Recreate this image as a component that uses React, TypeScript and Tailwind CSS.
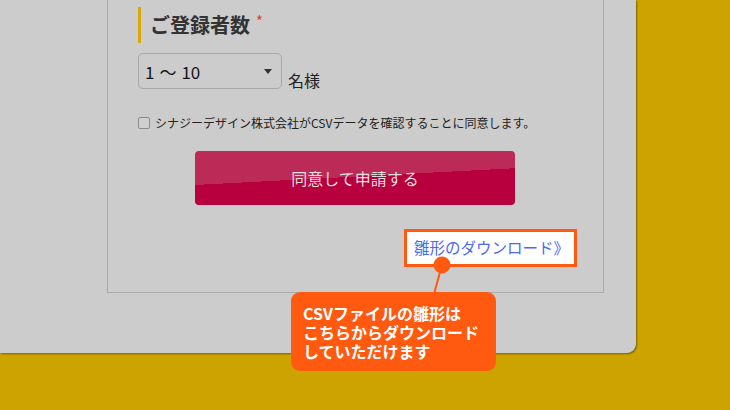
import React from "react";

const font = {
  fontFamily: '"Noto Sans CJK JP", "Noto Sans", sans-serif',
};

export default function App() {
  return (
    <div
      className="relative w-[730px] h-[410px] overflow-hidden bg-[#cca300]"
      style={font}
    >
      <div className="w-[636px] h-[353px] bg-[#cccccc] rounded-br-[9px] shadow-[1px_1px_2px_rgba(0,0,0,0.4)]">
        <div className="ml-[107px] w-[497px] h-[293px] border-x border-b border-[#ababab] pl-[30px] pt-[7px]">
          {/* heading */}
          <div className="flex items-center h-[36px] border-l-[3px] border-[#d9a800] pl-[9px]">
            <span className="text-[20px] font-bold text-[#333333] leading-none">
              ご登録者数
            </span>
            <span className="ml-[6px] self-start mt-[6px] text-[15px] leading-none text-[#e2412c]">
              *
            </span>
          </div>

          {/* select */}
          <div className="mt-[10px] flex items-end">
            <div className="relative flex items-center gap-[5px] w-[144px] h-[36px] rounded-[5px] border border-[#a8a8a8] pl-[6px] text-[17px] leading-none text-[#151515]">
              <span>1</span>
              <span>～</span>
              <span>10</span>
              <svg
                className="absolute right-[9px] top-[15px]"
                width="8"
                height="5"
                viewBox="0 0 8 5"
              >
                <path d="M0 0 L8 0 L4 5 Z" fill="#333" />
              </svg>
            </div>
            <span className="ml-[6px] mb-[1px] text-[16px] leading-none text-[#222]">
              名様
            </span>
          </div>

          {/* checkbox */}
          <div className="mt-[25px] flex items-center h-[18px]">
            <span className="w-[12px] h-[12px] rounded-[2px] border border-[#8c8c8c] bg-[#cfcfcf]" />
            <span className="ml-[5px] text-[12px] leading-none text-[#222]">
              シナジーデザイン株式会社がCSVデータを確認することに同意します。
            </span>
          </div>

          {/* button */}
          <div className="mt-[19px] ml-[57px] w-[320px] h-[54px] rounded-[4px] flex items-center justify-center bg-[linear-gradient(177deg,#bc2b57_48%,#b9003f_48%)]">
            <span className="text-[16px] text-[#dedede] leading-none">
              同意して申請する
            </span>
          </div>

          {/* link */}
          <div className="mt-[24px] flex justify-end pr-[26px]">
            <div className="h-[38px] w-[173px] border-[3px] border-[#ff5a10] bg-white flex items-center pl-[7px]">
              <span className="text-[15.5px] leading-none text-[#4a6af0] whitespace-nowrap">
                雛形のダウンロード》
              </span>
            </div>
          </div>
        </div>
      </div>

      {/* annotation pointer */}
      <svg
        className="absolute left-[420px] top-[250px]"
        width="40"
        height="50"
        viewBox="0 0 40 50"
      >
        <line x1="22" y1="15" x2="14" y2="44" stroke="#ff5a10" strokeWidth="2" />
        <circle cx="22" cy="15" r="8.5" fill="#ff5a10" />
      </svg>

      {/* bubble */}
      <div className="absolute left-[291px] top-[292px] w-[205px] h-[79px] rounded-[9px] bg-[#ff5a10] pl-[12px] pt-[12px] text-[16px] font-bold leading-[19px] text-white">
        <div>CSVファイルの雛形は</div>
        <div>こちらからダウンロード</div>
        <div>していただけます</div>
      </div>
    </div>
  );
}
